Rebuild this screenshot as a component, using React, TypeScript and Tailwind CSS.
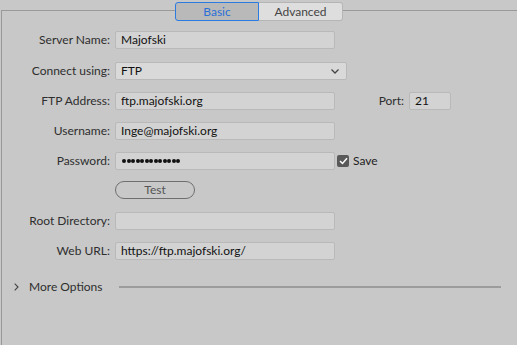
import React from "react";

const font = { fontFamily: 'Lato, "Noto Sans", Arial, sans-serif' };

function Label({ children }: { children: React.ReactNode }) {
  return (
    <div className="w-[113px] shrink-0 text-right pr-[5px] text-[12px] text-[#2e2e2e]">{children}</div>
  );
}

function Input({ children, w = 220, className = "" }: { children?: React.ReactNode; w?: number; className?: string }) {
  return (
    <div
      className={`h-[18px] border border-[#b9b9b9] bg-[#d3d3d3] rounded-[2px] flex items-center pl-[5px] text-[12px] text-[#111] ${className}`}
      style={{ width: w }}
    >
      {children}
    </div>
  );
}

export default function App() {
  return (
    <div className="w-[517px] h-[345px] bg-[#c8c8c8] relative overflow-hidden" style={font}>
      <div className="absolute left-0 right-0 top-[2px] flex justify-center z-10">
        <div className="flex h-[19px] pl-[1px]">
          <div className="w-[84px] h-full border border-[#2b7be0] bg-[#b9b9b9] rounded-l-[3px] flex items-center justify-center text-[12px] text-[#2a70d8]">
            Basic
          </div>
          <div className="w-[84px] h-full border border-l-0 border-[#b5b5b5] bg-[#dedede] rounded-r-[3px] flex items-center justify-center text-[12px] text-[#444]">
            Advanced
          </div>
        </div>
      </div>
      <div className="absolute left-[1px] right-0 top-[10px] bottom-0 border-t border-l border-[#9a9a9a]">
        <div className="flex flex-col pt-[20px] gap-[12px]">
          <div className="flex items-center h-[18px]">
            <Label>Server Name:</Label>
            <Input w={220}>Majofski</Input>
          </div>
          <div className="flex items-center h-[18px] mt-[1px]">
            <Label>Connect using:</Label>
            <div className="w-[232px] h-[18px] border border-[#b9b9b9] bg-[#d9d9d9] rounded-[2px] flex items-center pl-[5px] pr-[7px] text-[12px] text-[#111] justify-between">
              <span>FTP</span>
              <svg width="8" height="5" viewBox="0 0 8 5">
                <path d="M0.5 0.5 L4 4 L7.5 0.5" stroke="#444" strokeWidth="1.3" fill="none" />
              </svg>
            </div>
          </div>
          <div className="flex items-center h-[18px]">
            <Label>FTP Address:</Label>
            <Input w={220}>ftp.majofski.org</Input>
            <div className="w-[74px] text-right text-[12px] text-[#2e2e2e] pr-[5px]">Port:</div>
            <Input w={42}>21</Input>
          </div>
          <div className="flex items-center h-[18px]">
            <Label>Username:</Label>
            <Input w={220}>Inge@majofski.org</Input>
          </div>
          <div className="flex items-center h-[18px]">
            <Label>Password:</Label>
            <Input w={220} className="gap-[0.5px] pl-[6px]">
              {Array.from({ length: 13 }).map((_, i) => (
                <div key={i} className="w-[4px] h-[4px] rounded-full bg-[#111] shrink-0" />
              ))}
            </Input>
            <div className="ml-[2px] w-[12px] h-[12px] rounded-[2px] bg-[#595959] flex items-center justify-center">
              <svg width="9" height="8" viewBox="0 0 9 8">
                <path d="M1 4 L3.5 6.5 L8 1.2" stroke="#fff" strokeWidth="1.5" fill="none" />
              </svg>
            </div>
            <div className="ml-[4px] text-[12px] text-[#222]">Save</div>
          </div>
          <div className="flex items-center h-[18px] -mt-[1px]">
            <div className="w-[113px] shrink-0" />
            <div className="w-[80px] h-[18px] rounded-full border border-[#6f6f6f] flex items-center justify-center text-[12px] text-[#555]">
              Test
            </div>
          </div>
          <div className="flex items-center h-[18px] mt-[1px]">
            <Label>Root Directory:</Label>
            <Input w={220} />
          </div>
          <div className="flex items-center h-[18px]">
            <Label>Web URL:</Label>
            <Input w={220}>https://ftp.majofski.org/</Input>
          </div>
          <div className="flex items-center h-[18px] mt-[6px]">
            <svg className="ml-[12px]" width="5" height="8" viewBox="0 0 5 8">
              <path d="M0.7 0.7 L4 4 L0.7 7.3" stroke="#444" strokeWidth="1.1" fill="none" />
            </svg>
            <div className="ml-[10px] w-[90px] text-[12px] text-[#2e2e2e]">More Options</div>
            <div className="flex-1 mr-[16px] h-[2px] bg-[#9c9c9c]" />
          </div>
        </div>
      </div>
    </div>
  );
}
